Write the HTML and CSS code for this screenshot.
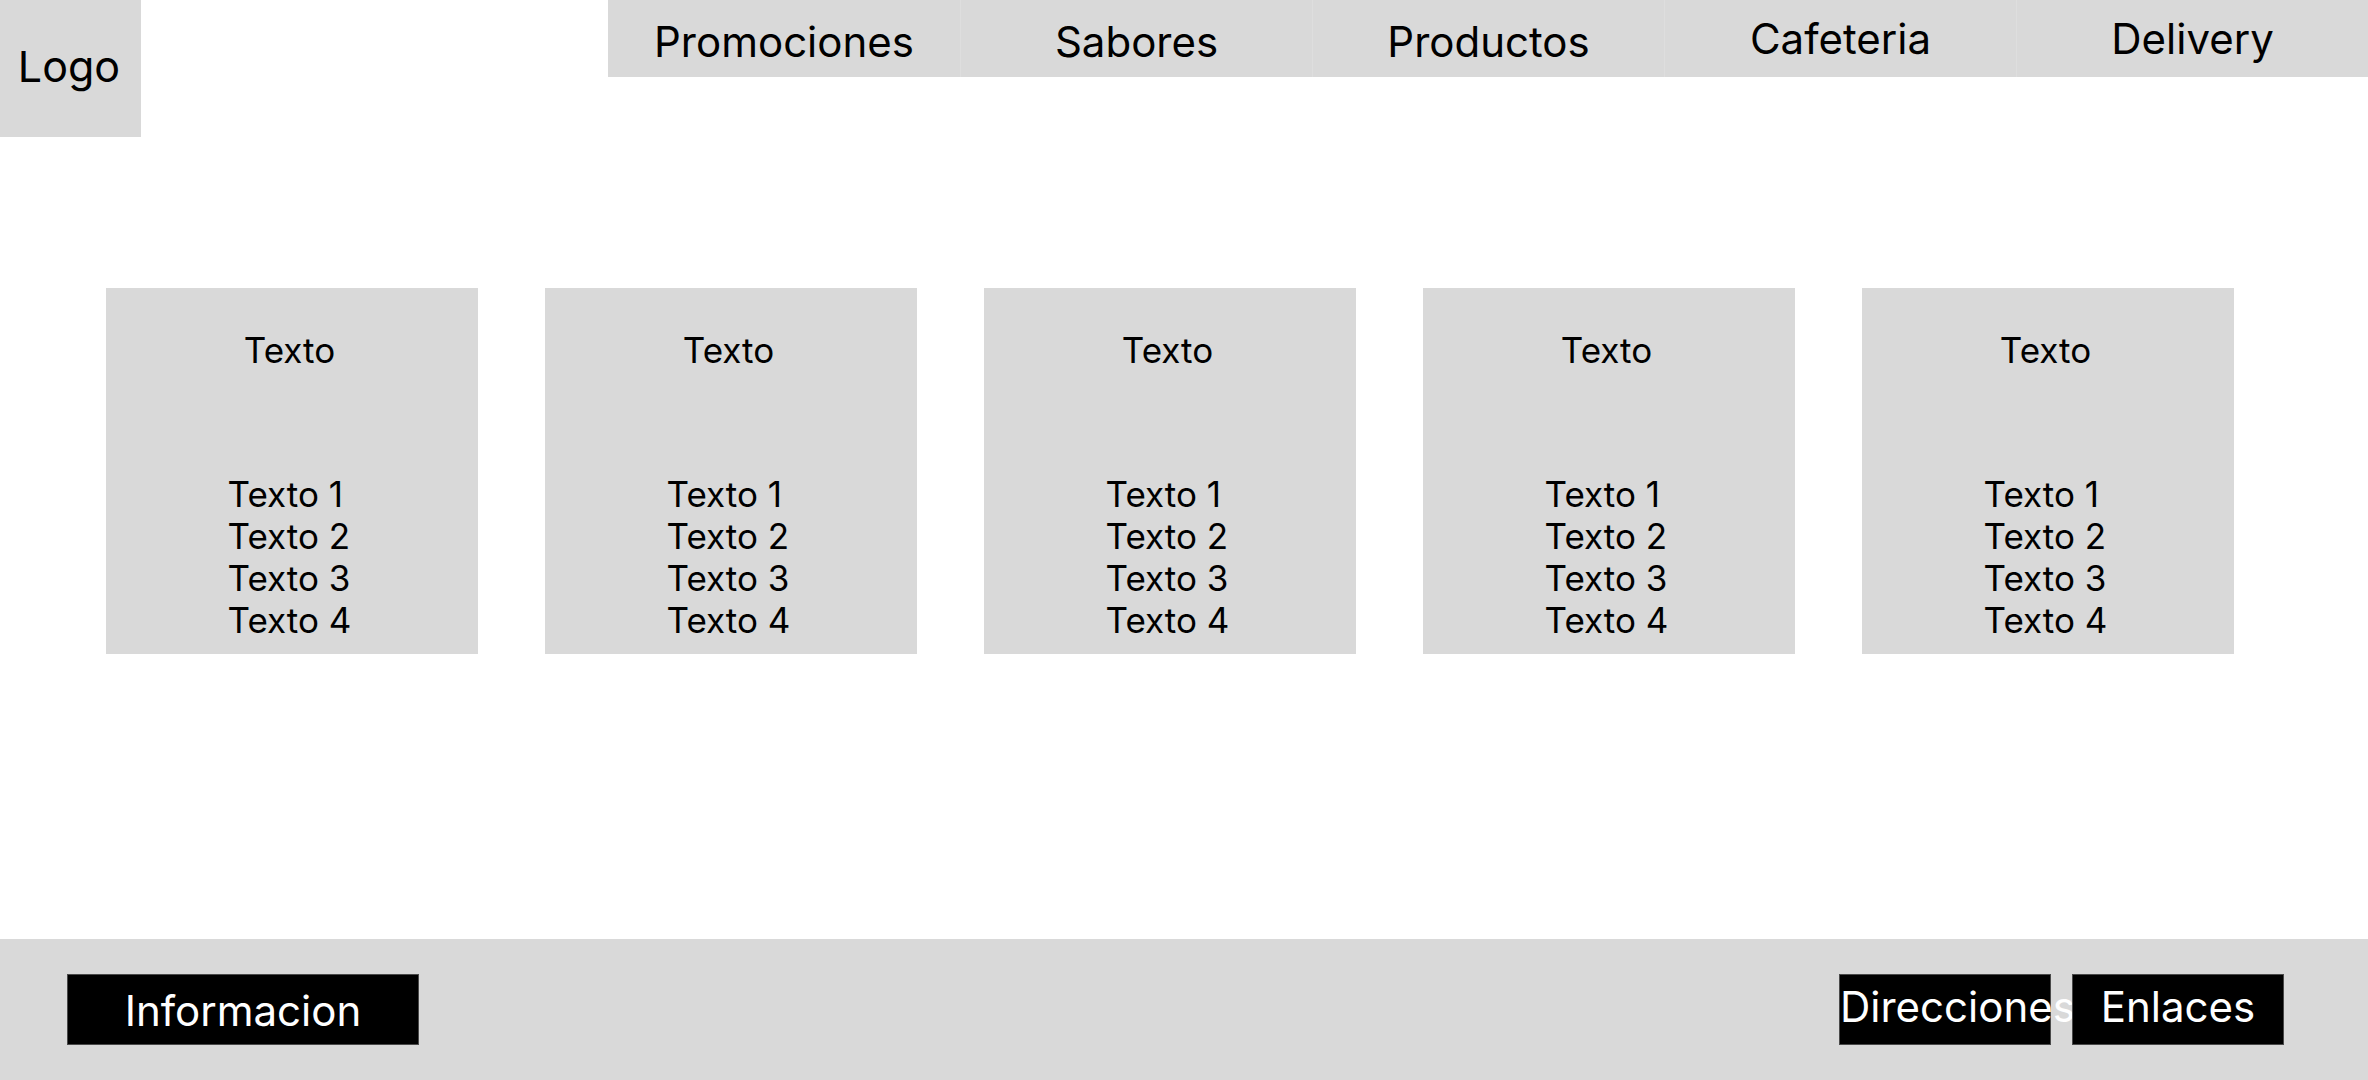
FILE: index.html
```html
<!DOCTYPE html>
<html lang="es">

<head>
  <meta charset="UTF-8">
  <meta name="viewport" content="width=device-width, initial-scale=1.0">
  <title>Heladeria</title>
  <link rel="stylesheet" href="styles.css">
</head>

<body>
  <header class="top">
    <div class="logo">Logo</div>
    <nav class="menu">
      <a class="menu-item low" href="#">Promociones</a>
      <a class="menu-item low" href="#">Sabores</a>
      <a class="menu-item low" href="#">Productos</a>
      <a class="menu-item" href="#">Cafeteria</a>
      <a class="menu-item" href="#">Delivery</a>
    </nav>
  </header>

  <main class="cards">
    <section class="card">
      <h2>Texto</h2>
      <ul>
        <li>Texto 1</li>
        <li>Texto 2</li>
        <li>Texto 3</li>
        <li>Texto 4</li>
      </ul>
    </section>
    <section class="card">
      <h2>Texto</h2>
      <ul>
        <li>Texto 1</li>
        <li>Texto 2</li>
        <li>Texto 3</li>
        <li>Texto 4</li>
      </ul>
    </section>
    <section class="card">
      <h2>Texto</h2>
      <ul>
        <li>Texto 1</li>
        <li>Texto 2</li>
        <li>Texto 3</li>
        <li>Texto 4</li>
      </ul>
    </section>
    <section class="card">
      <h2>Texto</h2>
      <ul>
        <li>Texto 1</li>
        <li>Texto 2</li>
        <li>Texto 3</li>
        <li>Texto 4</li>
      </ul>
    </section>
    <section class="card">
      <h2>Texto</h2>
      <ul>
        <li>Texto 1</li>
        <li>Texto 2</li>
        <li>Texto 3</li>
        <li>Texto 4</li>
      </ul>
    </section>
  </main>

  <footer class="bottom">
    <a class="box wide" href="#">Informacion</a>
    <div class="links">
      <a class="box" href="#">Direcciones</a>
      <a class="box" href="#">Enlaces</a>
    </div>
  </footer>
</body>

</html>
```

FILE: styles.css
```css
body {
  color: #000;
  display: flex;
  flex-direction: column;
  font-family: Inter, "Noto Sans", sans-serif;
  height: 100vh;
  margin: 0;
}

a {
  color: inherit;
  text-decoration: none;
}

.top {
  display: flex;
  align-items: flex-start;

  .logo {
    align-items: center;
    background: #d9d9d9;
    box-sizing: border-box;
    display: flex;
    font-size: 43px;
    height: 137px;
    justify-content: center;
    padding: 0 3px 6px 0;
    width: 141px;
  }

  .menu {
    display: flex;
    margin-left: auto;
  }

  .menu-item {
    align-items: center;
    background: #d9d9d9;
    box-sizing: border-box;
    display: flex;
    font-size: 42px;
    height: 77px;
    justify-content: center;
    width: 352px;

    & + .menu-item {
      border-left: 1px solid #dedede;
    }

    &.low {
      padding-top: 6px;
    }
  }
}

.cards {
  display: flex;
  gap: 67px;
  padding: 151px 0 0 106px;

  .card {
    background: #d9d9d9;
    box-sizing: border-box;
    display: flex;
    flex-direction: column;
    align-items: center;
    height: 366px;
    padding: 41px 5px 0 0;
    width: 372px;
  }

  h2 {
    font-size: 35px;
    font-weight: 400;
    line-height: 42px;
    margin: 0 0 102px;
  }

  ul {
    font-size: 35px;
    line-height: 42px;
    list-style: none;
    margin: 0;
    padding: 0;
  }
}

.bottom {
  align-items: flex-start;
  background: #d9d9d9;
  box-sizing: border-box;
  display: flex;
  height: 141px;
  margin-top: auto;
  padding: 35px 84px 0 67px;

  .links {
    display: flex;
    gap: 21px;
    margin-left: auto;
  }

  .box {
    background: #000;
    border: 1px solid #4a4a4a;
    box-sizing: border-box;
    color: #fff;
    font-size: 42px;
    height: 71px;
    line-height: 63px;
    text-align: center;
    white-space: nowrap;
    width: 212px;

    &.wide {
      line-height: 71px;
      width: 352px;
    }
  }
}
```
